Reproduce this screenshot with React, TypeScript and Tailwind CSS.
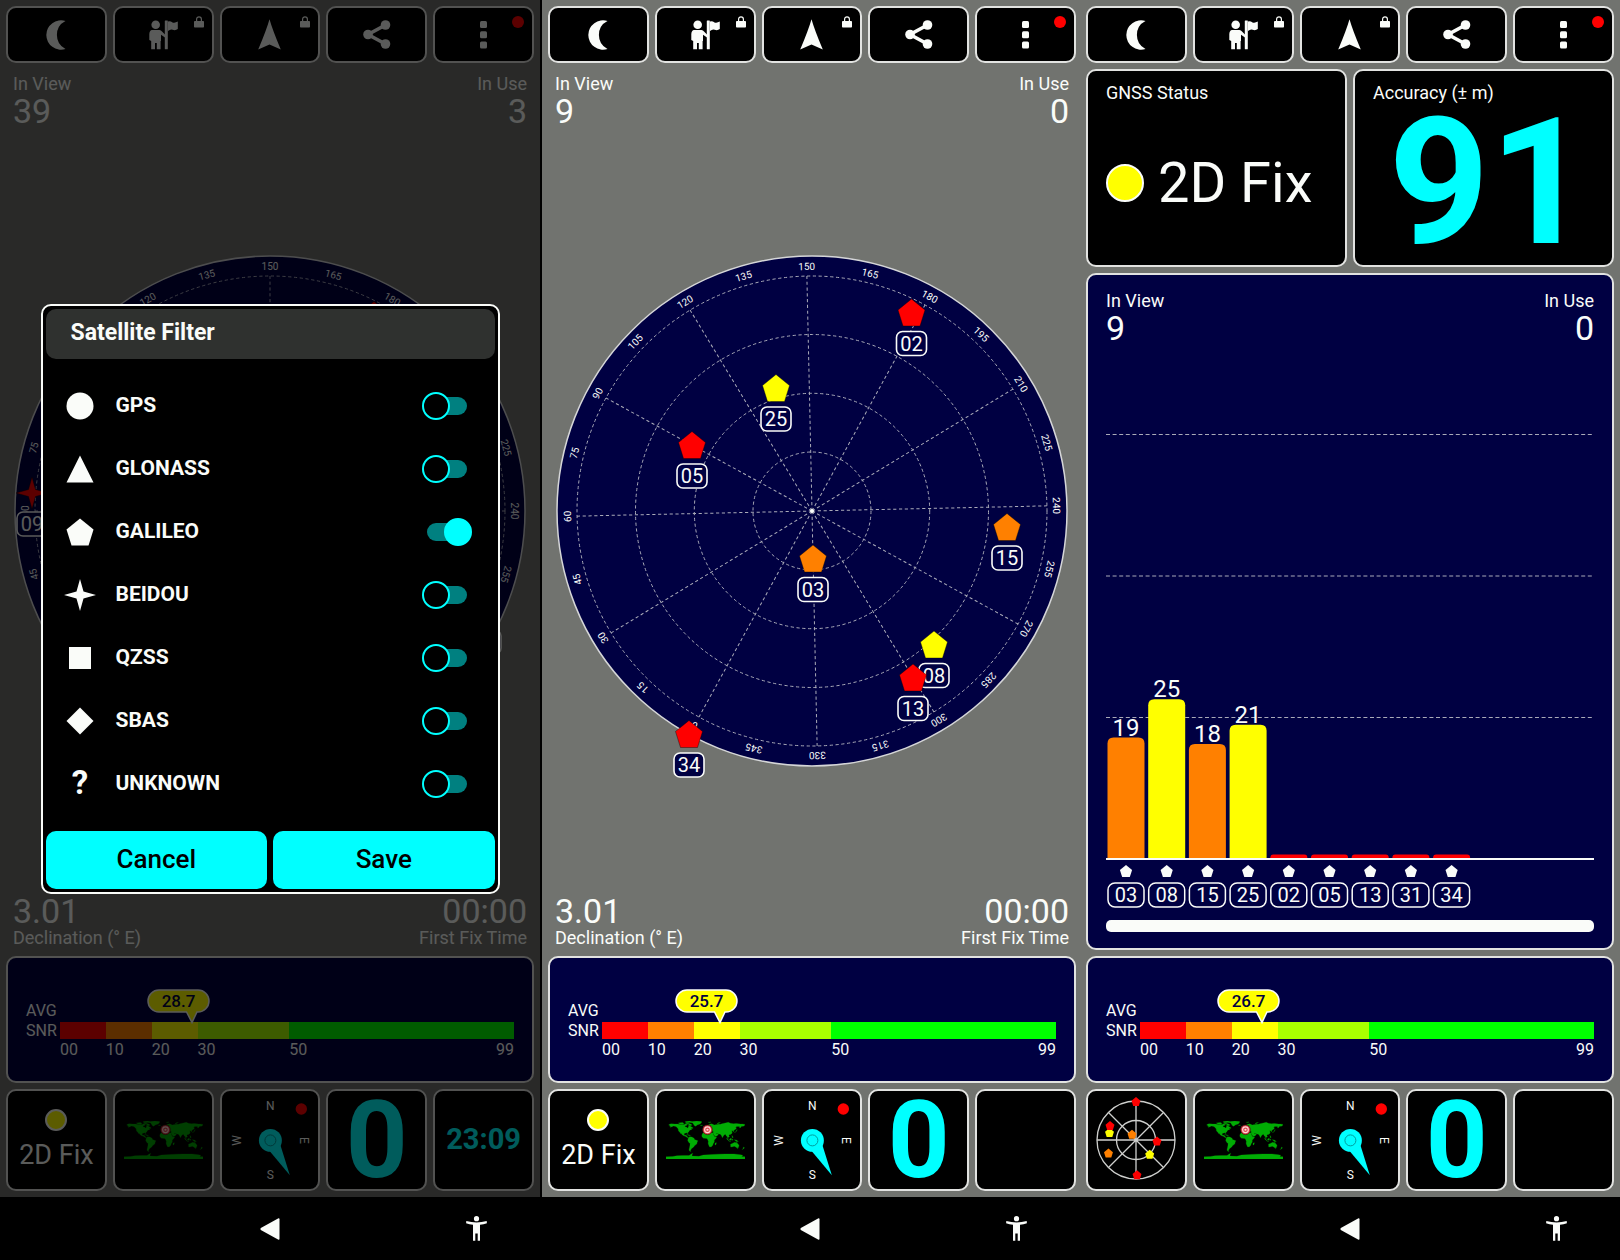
import React from "react";

const RED = "#ff0000";
const ORANGE = "#ff8000";
const YELLOW = "#ffff00";
const WHITE = "#fafcf9";
const NAVY = "#000042";

type Shape = "pentagon" | "star";
type Satellite = { id: string; x: number; y: number; color: string; shape?: Shape };

const PENTAGON = "0,-13.5 13.5,-2.5 8.5,13.5 -8.5,13.5 -13.5,-2.5";
const STAR = "0,-16 3.5,-3.5 16,0 3.5,3.5 0,16 -3.5,3.5 -16,0 -3.5,-3.5";

/* ---------- Icons ---------- */

function MoonIcon() {
  return (
    <svg width="20" height="30" viewBox="0 0 20 30" fill="currentColor" aria-hidden="true">
      <path d="M19.500 1 A14.700 14.700 0 1 0 19.500 29 A15.700 15.700 0 0 1 19.500 1 Z" />
    </svg>
  );
}

function GuideIcon() {
  return (
    <svg width="29" height="30" viewBox="0 0 29 30" fill="currentColor" aria-hidden="true">
      <circle cx="6.700" cy="4.700" r="4.300" />
      <path d="M3 10 H10.500 Q12 10 13 11.500 L16 14.500 V17.500 L12 14.800 V21 H11.600 V29.200 H7.800 V23 H6 V29.200 H2.200 V21 L0.300 20 V14 Q0.600 10.300 3 10 Z" />
      <rect x="15.800" y="0.500" width="3" height="28.700" rx="0.500" />
      <path d="M19 1.500 Q21.500 1 23.500 2.400 Q26 3.200 28.800 1.500 V9 Q26.500 10.800 23.700 9.800 Q21.500 8.800 19 11 Z" />
    </svg>
  );
}

function NavigateIcon() {
  return (
    <svg width="23" height="31" viewBox="0 0 23 31" fill="currentColor" aria-hidden="true">
      <path d="M11.500 0.300 Q14.500 11 22.800 30.500 L11.500 25.500 L0.200 30.500 Q8.500 11 11.500 0.300 Z" />
    </svg>
  );
}

function ShareIcon() {
  return (
    <svg width="28" height="29" viewBox="0 0 28 29" fill="currentColor" aria-hidden="true">
      <path d="M22.500 5 L5 14.500 L22.500 24" fill="none" stroke="currentColor" strokeWidth="3.600" />
      <circle cx="22.500" cy="5" r="4.800" />
      <circle cx="5" cy="14.500" r="4.800" />
      <circle cx="22.500" cy="24" r="4.800" />
    </svg>
  );
}

function MoreIcon() {
  return (
    <svg width="7" height="28" viewBox="0 0 7 28" fill="currentColor" aria-hidden="true">
      <rect width="7" height="7" rx="1.500" />
      <rect y="10.300" width="7" height="7" rx="1.500" />
      <rect y="20.500" width="7" height="7" rx="1.500" />
    </svg>
  );
}

function LockBadge() {
  return (
    <svg className="absolute top-2 right-2" width="10" height="12" viewBox="0 0 10 12" aria-hidden="true">
      <rect y="5" width="10" height="6.500" rx="0.800" fill="currentColor" />
      <path d="M2.600 5.500 V3.200 A2.400 2.400 0 0 1 7.400 3.200 V5.500" fill="none" stroke="currentColor" strokeWidth="1.200" />
    </svg>
  );
}

/* ---------- Tool bar ---------- */

function Toolbar() {
  const items = [
    { label: "Night mode", icon: <MoonIcon /> },
    { label: "Guide", icon: <GuideIcon />, badge: <LockBadge /> },
    { label: "Navigate", icon: <NavigateIcon />, badge: <LockBadge /> },
    { label: "Share", icon: <ShareIcon /> },
    { label: "More", icon: <MoreIcon />, badge: <span className="absolute top-2 right-2 size-3 rounded-full bg-[#ff0000]" /> },
  ];
  return (
    <div className="grid grid-cols-5 gap-1.5">
      {items.map((item) => (
        <button
          key={item.label}
          type="button"
          aria-label={item.label}
          className="relative flex h-[57px] items-center justify-center rounded-[10px] border-2 border-[#e2e3e1] bg-black"
        >
          {item.icon}
          {item.badge}
        </button>
      ))}
    </div>
  );
}

/* ---------- Readouts ---------- */

function Readout({ label, value, right = false, below = false }: { label: string; value: string; right?: boolean; below?: boolean }) {
  return (
    <div className={`flex ${below ? "flex-col-reverse" : "flex-col"} ${right ? "items-end" : "items-start"}`}>
      <span className="text-lg leading-6">{label}</span>
      <span className="text-[34px] leading-[30px]">{value}</span>
    </div>
  );
}

/* ---------- Sky plot ---------- */

function SkyPlot({ rotation, satellites }: { rotation: number; satellites: Satellite[] }) {
  const labels = Array.from({ length: 24 }, (_, i) => i * 15);
  const spokes = Array.from({ length: 12 }, (_, i) => i * 30);
  return (
    <svg viewBox="-264 -264 528 528" className="w-full overflow-visible" role="img" aria-label="Sky plot">
      <circle r="255" fill={NAVY} stroke="#d5d6d8" strokeWidth="1.500" />
      <g fill="none" stroke="#a9aab8" strokeWidth="1" strokeDasharray="3.200 2.600">
        {[59, 117.7, 176.5, 235].map((r) => (
          <circle key={r} r={r} />
        ))}
        {spokes.map((a) => (
          <line key={a} y1="0" y2="-235" transform={`rotate(${a + rotation})`} />
        ))}
      </g>
      <circle r="2" fill={WHITE} />
      <g fill={WHITE} fontSize="10" textAnchor="middle">
        {labels.map((v) => (
          <text key={v} y="-241" transform={`rotate(${v - 150 + rotation})`}>
            {v}
          </text>
        ))}
      </g>
      {satellites.map((s, i) => (
        <g key={`${s.id}-${i}`} transform={`translate(${s.x} ${s.y - 1})`}>
          <polygon points={s.shape === "star" ? STAR : PENTAGON} fill={s.color} stroke="#00000060" strokeWidth="1" />
          <rect x="-15" y="19" width="30" height="24" rx="6" fill={NAVY} stroke={WHITE} strokeWidth="1.600" />
          <text y="38" fontSize="20" textAnchor="middle" fill={WHITE}>
            {s.id}
          </text>
        </g>
      ))}
    </svg>
  );
}

function SkyScreen({ inView, inUse, rotation, satellites }: { inView: string; inUse: string; rotation: number; satellites: Satellite[] }) {
  return (
    <section className="flex flex-1 flex-col pt-[3px]">
      <div className="flex justify-between px-[7px]">
        <Readout label="In View" value={inView} />
        <Readout label="In Use" value={inUse} right />
      </div>
      <div className="flex flex-1 items-center justify-center">
        <SkyPlot rotation={rotation} satellites={satellites} />
      </div>
      <div className="flex justify-between px-[7px]">
        <Readout label="Declination (° E)" value="3.01" below />
        <Readout label="First Fix Time" value="00:00" right below />
      </div>
    </section>
  );
}

/* ---------- Average signal strip ---------- */

function SignalPanel({ value }: { value: number }) {
  return (
    <section className="flex items-start rounded-[10px] border-2 border-[#e2e3e1] bg-[#000042] px-[18px] pt-[43px] pb-5">
      <div className="w-[34px] shrink-0 text-base leading-5">
        <p>AVG</p>
        <p>SNR</p>
      </div>
      <div className="relative flex-1 pt-[21px]">
        <div className="flex h-[17px]">
          <div className="grow-[10] bg-[#ff0000]" />
          <div className="grow-[10] bg-[#ff8000]" />
          <div className="grow-[10] bg-[#ffff00]" />
          <div className="grow-[20] bg-[#a8ff00]" />
          <div className="grow-[49] bg-[#00ff00]" />
        </div>
        <div className="flex text-base leading-[22px]">
          <span className="grow-[10] basis-0">00</span>
          <span className="grow-[10] basis-0">10</span>
          <span className="grow-[10] basis-0">20</span>
          <span className="grow-[20] basis-0">30</span>
          <span className="flex grow-[49] basis-0 justify-between">
            <span>50</span>
            <span>99</span>
          </span>
        </div>
        <div className="absolute -top-3 -ml-[45px]" style={{ left: `${(value / 99) * 100}%` }}>
          <svg width="64" height="36" viewBox="0 0 64 36" role="img" aria-label={`Average ${value}`}>
            <path
              d="M12 1 H51 A11 11 0 0 1 51 23 H50 L45 33.500 L39.500 23 H12 A11 11 0 0 1 12 1 Z"
              fill={YELLOW}
              stroke={WHITE}
              strokeWidth="1.500"
            />
            <text x="31.500" y="18" fontSize="17" fontWeight="500" textAnchor="middle" fill={NAVY}>
              {value.toFixed(1)}
            </text>
          </svg>
        </div>
      </div>
    </section>
  );
}

/* ---------- Bottom tiles ---------- */

const LAND = [
  "-168,-66 -162,-70 -156,-71 -140,-70 -128,-70 -115,-68 -108,-68 -95,-68 -94,-72 -85,-69 -82,-67 -87,-64 -94,-61 -93,-58 -85,-55 -82,-52 -80,-52 -79,-55 -77,-57 -78,-62 -72,-62 -65,-58 -61,-55 -56,-52 -60,-50 -66,-50 -64,-46 -61,-46 -66,-44 -70,-43 -74,-40 -76,-35 -81,-31 -80,-26 -82,-27 -84,-30 -90,-29 -97,-27 -97,-21 -94,-18 -91,-19 -87,-21 -88,-16 -83,-15 -83,-10 -78,-9 -80,-7 -85,-10 -92,-14 -97,-16 -105,-20 -109,-26 -113,-31 -110,-24 -113,-27 -117,-33 -122,-37 -124,-42 -124,-48 -130,-54 -135,-59 -146,-61 -153,-58 -162,-55 -157,-59 -165,-61 -161,-65",
  "-124,-75 -105,-77 -98,-73 -105,-69 -117,-70",
  "-90,-76 -78,-76 -62,-82 -72,-84 -92,-82",
  "-90,-74 -80,-74 -70,-71 -61,-66 -68,-62 -78,-65 -74,-68 -88,-71",
  "-73,-78 -60,-82 -40,-84 -18,-82 -19,-75 -25,-70 -38,-66 -44,-60 -50,-62 -54,-68 -58,-75",
  "-78,-8 -72,-12 -62,-11 -52,-5 -50,0 -44,3 -35,6 -38,13 -40,21 -48,27 -54,34 -58,38 -63,41 -66,46 -69,51 -66,55 -73,53 -75,46 -73,38 -71,28 -70,18 -76,14 -81,5 -80,-1",
  "-9,-43 -9,-37 -5,-36 0,-39 3,-42 8,-44 12,-42 16,-38 18,-40 14,-45 20,-41 23,-37 26,-40 28,-37 36,-36 35,-32 34,-28 39,-21 43,-13 52,-16 59,-22 56,-25 51,-25 48,-30 52,-27 57,-26 62,-25 67,-24 70,-21 73,-17 77,-8 80,-13 82,-17 88,-22 92,-22 95,-16 98,-15 99,-8 103,-2 103,-5 100,-9 101,-13 105,-9 109,-12 106,-18 108,-21 114,-22 120,-27 122,-31 119,-35 122,-37 118,-39 122,-40 126,-38 127,-34 129,-36 128,-39 132,-43 140,-49 140,-54 136,-55 143,-59 155,-59 156,-52 162,-56 164,-60 172,-60 178,-63 180,-68 170,-70 160,-70 140,-73 128,-72 113,-74 104,-78 90,-75 75,-72 68,-69 60,-69 45,-67 40,-66 28,-71 18,-69 12,-65 5,-61 7,-58 12,-56 17,-60 18,-63 24,-66 22,-61 30,-60 24,-58 20,-55 12,-54 9,-57 8,-54 3,-51 -4,-48 -1,-44",
  "-6,-35 10,-37 11,-34 20,-32 32,-31 35,-27 38,-18 43,-11 51,-11 46,-3 40,3 40,12 35,20 33,26 27,33 19,34 15,27 12,18 13,8 9,-1 6,-4 -4,-5 -9,-5 -16,-12 -17,-20 -13,-27",
  "44,16 50,15 47,25 43,24",
  "-5,-50 1,-51 0,-54 -3,-59 -6,-57",
  "-24,-65 -15,-66 -14,-64 -22,-63",
  "12,-78 25,-80 20,-77",
  "52,-71 58,-76 68,-77 56,-71",
  "131,-31 140,-35 142,-44 145,-44 141,-37 135,-33",
  "95,-5 104,2 106,6 100,1",
  "105,6 115,8 114,9 106,7",
  "109,-1 117,-7 118,-1 115,4 110,2",
  "120,-1 125,-1 122,5 119,3",
  "120,-18 123,-16 126,-7 122,-9",
  "131,1 141,3 150,10 141,9 134,4",
  "114,22 122,18 129,15 137,12 136,15 141,17 142,11 146,18 153,26 150,37 144,39 138,35 131,31 124,33 115,35",
  "145,41 148,41 147,44",
  "173,35 178,38 174,42 167,46 172,41",
  "-180,79 -150,78 -130,74 -100,73 -75,73 -65,66 -58,63 -62,72 -60,76 -30,77 -10,71 30,69 55,67 90,66 130,66 160,70 170,72 165,78 180,79 180,90 -180,90",
  "-85,-22 -75,-20 -68,-18 -75,-18",
];

function WorldMap() {
  return (
    <svg className="w-[79px]" viewBox="-180 -84 360 174" role="img" aria-label="World map">
      <g fill="#00ac04" stroke="#00ac04" strokeWidth="1">
        {LAND.map((points, i) => (
          <polygon key={i} points={points} />
        ))}
      </g>
      <circle cx="9" cy="-44" r="22" fill="#e0484f" stroke="#400508" strokeWidth="3" />
      <circle cx="9" cy="-44" r="13" fill="#e0484f" stroke="#ffd9d9" strokeWidth="5" />
      <circle cx="9" cy="-44" r="5" fill="#ffd9d9" />
    </svg>
  );
}

function Compass() {
  return (
    <svg className="w-full" viewBox="0 0 97 98" role="img" aria-label="Compass">
      <g fill={WHITE} fontSize="12" textAnchor="middle">
        <text x="48.500" y="19.500">N</text>
        <text x="48.500" y="88.500">S</text>
        <text transform="translate(19.500 49.500) rotate(-90)">W</text>
        <text transform="translate(78.500 49.500) rotate(90)">E</text>
      </g>
      <path d="M47.500 60 L68 84.500 L58.500 54 Z" fill="#00ffff" />
      <circle cx="48.500" cy="49.500" r="11.500" fill="#00ffff" />
      <circle cx="48.500" cy="49.500" r="5.500" fill="none" stroke="#009c9c" strokeWidth="1" />
      <circle cx="79.500" cy="18" r="5.700" fill={RED} />
    </svg>
  );
}

function MiniRadar() {
  const sats = [
    { x: 0, y: -38.5, c: RED },
    { x: -26.5, y: -7.5, c: YELLOW },
    { x: -26, y: -14.5, c: RED },
    { x: -4, y: -5.7, c: ORANGE },
    { x: -27.5, y: 13, c: ORANGE },
    { x: 21, y: 1, c: RED },
    { x: 13.7, y: 14.3, c: YELLOW },
    { x: 1, y: 34.7, c: RED },
  ];
  return (
    <svg className="w-[90px]" viewBox="-45 -45 90 90" role="img" aria-label="Satellite positions">
      <g fill="none" stroke="#cfd0ce" strokeWidth="1.300">
        <circle r="39" />
        <circle r="19.500" />
        <path d="M-39 0 H39 M0 -39 V39 M-27.500 -27.500 L27.500 27.500 M-27.500 27.500 L27.500 -27.500" />
      </g>
      {sats.map((s, i) => (
        <polygon key={i} points={PENTAGON} fill={s.c} transform={`translate(${s.x} ${s.y}) scale(0.33)`} />
      ))}
    </svg>
  );
}

function FixTile() {
  return (
    <span className="flex flex-col items-center gap-2">
      <span className="size-[22px] rounded-full border-2 border-[#fafcf9] bg-[#ffff00]" />
      <span className="text-[27px] leading-8 whitespace-nowrap">2D Fix</span>
    </span>
  );
}

function Tile({ label, children }: { label: string; children?: React.ReactNode }) {
  return (
    <button
      type="button"
      aria-label={label}
      className="flex h-[102px] min-w-0 items-center justify-center rounded-[10px] border-2 border-[#e2e3e1] bg-black"
    >
      {children}
    </button>
  );
}

function Tiles({ first, time }: { first: React.ReactNode; time?: string }) {
  return (
    <div className="grid grid-cols-5 gap-1.5">
      <Tile label="GNSS status">{first}</Tile>
      <Tile label="Location">
        <WorldMap />
      </Tile>
      <Tile label="Compass">
        <Compass />
      </Tile>
      <Tile label="Speed">
        <span className="text-[108px] leading-none font-bold text-[#00ffff]">0</span>
      </Tile>
      <Tile label="Time">{time && <span className="text-[29px] font-bold text-[#00ffff]">{time}</span>}</Tile>
    </div>
  );
}

function SystemBar() {
  return (
    <nav className="grid h-[63px] grid-cols-5 items-center gap-1.5 bg-black px-1.5 text-[#fafcf9]">
      <button type="button" aria-label="Back" className="col-start-3 flex justify-center">
        <svg width="20" height="22" viewBox="0 0 20 22" fill="currentColor" aria-hidden="true">
          <path d="M18.500 0.300 Q19.500 0 19.500 1.200 V20.800 Q19.500 22 18.500 21.700 L0.800 12 Q0 11 0.800 10 Z" />
        </svg>
      </button>
      <button type="button" aria-label="Accessibility" className="col-start-5 flex justify-center pr-3.5">
        <svg width="21" height="25" viewBox="0 0 21 25" fill="currentColor" aria-hidden="true">
          <circle cx="10.500" cy="2.700" r="2.600" />
          <path d="M0.300 5 Q10.500 7.800 20.700 5 L20.900 7.300 Q17.500 8.400 14 8.700 V24.700 H11.700 V17.500 H9.300 V24.700 H7 V8.700 Q3.500 8.400 0.100 7.300 Z" />
        </svg>
      </button>
    </nav>
  );
}

/* ---------- Filter dialog ---------- */

const SYSTEMS = [
  { name: "GPS", on: false, icon: <circle r="13.500" /> },
  { name: "GLONASS", on: false, icon: <polygon points="0,-13.500 13.500,13.500 -13.500,13.500" /> },
  { name: "GALILEO", on: true, icon: <polygon points={PENTAGON} /> },
  { name: "BEIDOU", on: false, icon: <polygon points={STAR} /> },
  { name: "QZSS", on: false, icon: <rect x="-11" y="-11" width="22" height="22" /> },
  { name: "SBAS", on: false, icon: <polygon points="0,-13.500 13.500,0 0,13.500 -13.500,0" /> },
  {
    name: "UNKNOWN",
    on: false,
    icon: (
      <text y="9.500" fontSize="33" fontWeight="700" textAnchor="middle">
        ?
      </text>
    ),
  },
];

function FilterDialog() {
  return (
    <div
      role="dialog"
      aria-labelledby="filter-title"
      className="w-[85%] rounded-[10px] border-2 border-[#fafcf9] bg-black p-[3px] text-[#fafcf9]"
    >
      <h2 id="filter-title" className="flex h-[50px] items-center rounded-[10px] bg-[#2f312f] px-[25px] text-[23px] font-bold">
        Satellite Filter
      </h2>
      <ul className="mt-4 mb-[15px]">
        {SYSTEMS.map((s) => (
          <li key={s.name}>
            <label className="flex h-[63px] items-center pr-7 pl-[18px] text-[21px] font-bold">
              <svg className="overflow-visible" width="32" height="32" viewBox="-16 -16 32 32" fill="currentColor" aria-hidden="true">
                {s.icon}
              </svg>
              <span className="ml-5 flex-1">{s.name}</span>
              <input
                type="checkbox"
                role="switch"
                defaultChecked={s.on}
                className="relative h-[18px] w-10 appearance-none rounded-full bg-[#008080] before:absolute before:-top-[5px] before:-left-[5px] before:size-7 before:rounded-full before:border-2 before:border-[#00ffff] before:bg-black before:content-[''] checked:before:left-[17px] checked:before:bg-[#00ffff]"
              />
            </label>
          </li>
        ))}
      </ul>
      <div className="grid grid-cols-2 gap-1.5 text-[26px] font-medium text-black">
        <button type="button" className="h-[58px] rounded-[10px] bg-[#00ffff]">
          Cancel
        </button>
        <button type="button" className="h-[58px] rounded-[10px] bg-[#00ffff]">
          Save
        </button>
      </div>
    </div>
  );
}

/* ---------- Signal chart ---------- */

const BARS = [
  { id: "03", value: 19, color: ORANGE },
  { id: "08", value: 25, color: YELLOW },
  { id: "15", value: 18, color: ORANGE },
  { id: "25", value: 21, color: YELLOW },
  { id: "02", value: 0, color: RED },
  { id: "05", value: 0, color: RED },
  { id: "13", value: 0, color: RED },
  { id: "31", value: 0, color: RED },
  { id: "34", value: 0, color: RED },
];

function SignalChart() {
  const axis = 516;
  return (
    <svg viewBox="0 0 488 565" className="w-full text-[#fafcf9]" role="img" aria-label="Signal strength by satellite">
      {[91.5, 233, 374.5].map((y) => (
        <line key={y} x1="0" x2="488" y1={y} y2={y} stroke="#a9aab8" strokeWidth="1" strokeDasharray="4 2.600" />
      ))}
      {BARS.map((b, i) => {
        const h = b.value ? b.value * 6.39 : 4.5;
        const r = b.value ? 6 : 3;
        const x = 1.5 + i * 40.7;
        return (
          <g key={b.id} textAnchor="middle" fill="currentColor">
            <path
              d={`M${x} ${axis} V${axis - h + r} Q${x} ${axis - h} ${x + r} ${axis - h} H${x + 37 - r} Q${x + 37} ${axis - h} ${x + 37} ${axis - h + r} V${axis} Z`}
              fill={b.color}
            />
            {b.value > 0 && (
              <text x={x + 18.5} y={axis - h - 2} fontSize="24">
                {b.value}
              </text>
            )}
            <polygon points={PENTAGON} transform={`translate(${x + 18.5} 528) scale(0.45)`} />
            <rect x={x + 0.5} y="540" width="36" height="24" rx="7" fill="none" stroke="currentColor" strokeWidth="1.500" />
            <text x={x + 18.5} y="559" fontSize="20">
              {b.id}
            </text>
          </g>
        );
      })}
      <line x1="0" x2="488" y1={axis} y2={axis} stroke="currentColor" strokeWidth="2" />
    </svg>
  );
}

function StatusScreen() {
  return (
    <>
      <div className="grid h-[198px] grid-cols-2 gap-1.5">
        <section className="flex flex-col rounded-[10px] border-2 border-[#e2e3e1] bg-black px-[18px] pt-2.5 pb-1">
          <h2 className="text-lg leading-6">GNSS Status</h2>
          <p className="flex flex-1 items-center gap-3.5 text-[56px] leading-none whitespace-nowrap">
            <span className="size-[38px] shrink-0 rounded-full border-2 border-[#fafcf9] bg-[#ffff00]" />
            2D Fix
          </p>
        </section>
        <section className="flex flex-col rounded-[10px] border-2 border-[#e2e3e1] bg-black px-[18px] pt-2.5 pb-1">
          <h2 className="text-lg leading-6">Accuracy (± m)</h2>
          <p className="flex flex-1 items-center justify-center pl-3 text-[176px] leading-[150px] font-bold text-[#00ffff]">91</p>
        </section>
      </div>
      <section className="flex flex-1 flex-col rounded-[10px] border-2 border-[#e2e3e1] bg-[#000042] px-[18px] pt-3.5 pb-4">
        <div className="flex justify-between">
          <Readout label="In View" value="9" />
          <Readout label="In Use" value="0" right />
        </div>
        <SignalChart />
        <div className="mt-auto h-3 rounded-[5px] bg-[#fafcf9]" />
      </section>
    </>
  );
}

/* ---------- Phones ---------- */

function Phone({
  children,
  edge = "px-1.5",
  overlay,
}: {
  children: React.ReactNode;
  edge?: string;
  overlay?: React.ReactNode;
}) {
  return (
    <main className="flex min-h-screen flex-col">
      <div className="relative flex flex-1 flex-col">
        <div className={`flex flex-1 flex-col gap-1.5 bg-[#71736f] py-1.5 text-[#fafcf9] ${edge}`}>{children}</div>
        {overlay && <div className="absolute inset-0 flex items-center justify-center bg-black/64">{overlay}</div>}
      </div>
      <SystemBar />
    </main>
  );
}

const DIMMED_SATELLITES: Satellite[] = [
  { id: "09", x: -238, y: -17, color: RED, shape: "star" },
  { id: "02", x: 104, y: -195, color: RED },
  { id: "36", x: 216, y: 101, color: YELLOW },
];

const SATELLITES: Satellite[] = [
  { id: "02", x: 99.5, y: -197.5, color: RED },
  { id: "25", x: -36, y: -122, color: YELLOW },
  { id: "05", x: -120, y: -65, color: RED },
  { id: "03", x: 1, y: 48.5, color: ORANGE },
  { id: "15", x: 195, y: 17, color: ORANGE },
  { id: "08", x: 122, y: 134.5, color: YELLOW },
  { id: "13", x: 101, y: 167.5, color: RED },
  { id: "34", x: -123, y: 224, color: RED },
];

export default function App() {
  return (
    <div className="grid min-h-screen grid-cols-3 bg-black font-['Roboto',sans-serif]">
      <Phone overlay={<FilterDialog />}>
        <Toolbar />
        <SkyScreen inView="39" inUse="3" rotation={0} satellites={DIMMED_SATELLITES} />
        <SignalPanel value={28.7} />
        <Tiles first={<FixTile />} time="23:09" />
      </Phone>
      <Phone edge="border-l-2 border-black pl-1.5 pr-1">
        <Toolbar />
        <SkyScreen inView="9" inUse="0" rotation={-1.25} satellites={SATELLITES} />
        <SignalPanel value={25.7} />
        <Tiles first={<FixTile />} />
      </Phone>
      <Phone>
        <Toolbar />
        <StatusScreen />
        <SignalPanel value={26.7} />
        <Tiles first={<MiniRadar />} />
      </Phone>
    </div>
  );
}
